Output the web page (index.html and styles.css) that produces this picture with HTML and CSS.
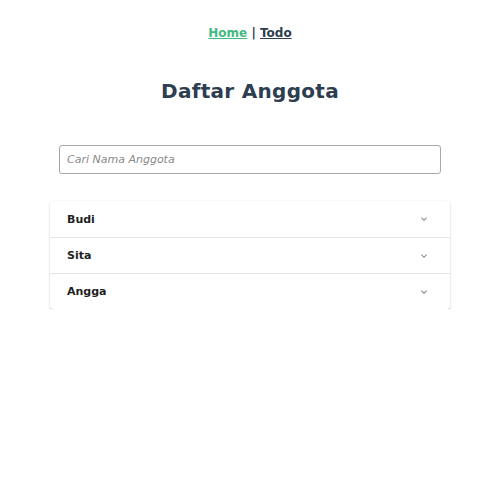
FILE: index.html
```html
<!DOCTYPE html>
<html lang="id">
<head>
<meta charset="utf-8">
<title>Daftar Anggota</title>
<link rel="stylesheet" href="styles.css">
</head>
<body>
<div class="app">
  <nav class="nav">
    <a href="#" class="link active">Home</a> | <a href="#" class="link">Todo</a>
  </nav>
  <h1 class="title">Daftar Anggota</h1>
  <div class="search-wrap">
    <input class="search" type="text" placeholder="Cari Nama Anggota">
  </div>
  <div class="panels">
    <div class="panel"><span class="name">Budi</span><svg class="chev" width="12" height="12" viewBox="0 0 24 24"><path d="M7.41 8.58L12 13.17l4.59-4.59L18 10l-6 6-6-6 1.41-1.42z" fill="#8a8a8a"/></svg></div>
    <div class="panel"><span class="name">Sita</span><svg class="chev" width="12" height="12" viewBox="0 0 24 24"><path d="M7.41 8.58L12 13.17l4.59-4.59L18 10l-6 6-6-6 1.41-1.42z" fill="#8a8a8a"/></svg></div>
    <div class="panel"><span class="name">Angga</span><svg class="chev" width="12" height="12" viewBox="0 0 24 24"><path d="M7.41 8.58L12 13.17l4.59-4.59L18 10l-6 6-6-6 1.41-1.42z" fill="#8a8a8a"/></svg></div>
  </div>
</div>
</body>
</html>
```
FILE: styles.css
```css
* { box-sizing: border-box; }
html, body { margin: 0; padding: 0; background: #fff; }
body {
  font-family: "DejaVu Sans", "Liberation Sans", sans-serif;
  color: #2c3e50;
}
.app { display: flex; flex-direction: column; align-items: center; }
.nav {
  padding-top: 25px;
  font-size: 12px;
  font-weight: bold;
  line-height: 16px;
  color: #2c3e50;
}
.link { color: #2c3e50; text-decoration: underline; }
.link.active { color: #42b983; }
.title {
  margin: 36px 0 0;
  font-size: 20px;
  line-height: 28px;
  font-weight: bold;
  color: #2c3e50;
  letter-spacing: 0.3px;
}
.search-wrap { width: 382px; margin-top: 40px; }
.search {
  width: 100%;
  height: 29px;
  border: 1px solid #a8a8a8;
  border-radius: 3px;
  padding: 0 7px;
  font-family: inherit;
  font-size: 11px;
  font-style: italic;
  outline: none;
}
.search::placeholder { color: #8a8a8a; }
.panels {
  width: 400px;
  margin-top: 27px;
  background: #fff;
  box-shadow: 0 2px 1px -1px rgba(0,0,0,0.22), 0 1px 1px 0 rgba(0,0,0,0.16), 0 1px 3px 0 rgba(0,0,0,0.14);
  border-radius: 3px;
}
.panel {
  height: 36px;
  display: flex;
  align-items: center;
  justify-content: space-between;
  padding: 0 20px 0 17px;
  border-top: 1px solid #e6e6e6;
}
.panel:first-child { border-top: none; }
.name { font-size: 11px; font-weight: bold; color: #1f1f1f; }
.chev { display: block; }
```
